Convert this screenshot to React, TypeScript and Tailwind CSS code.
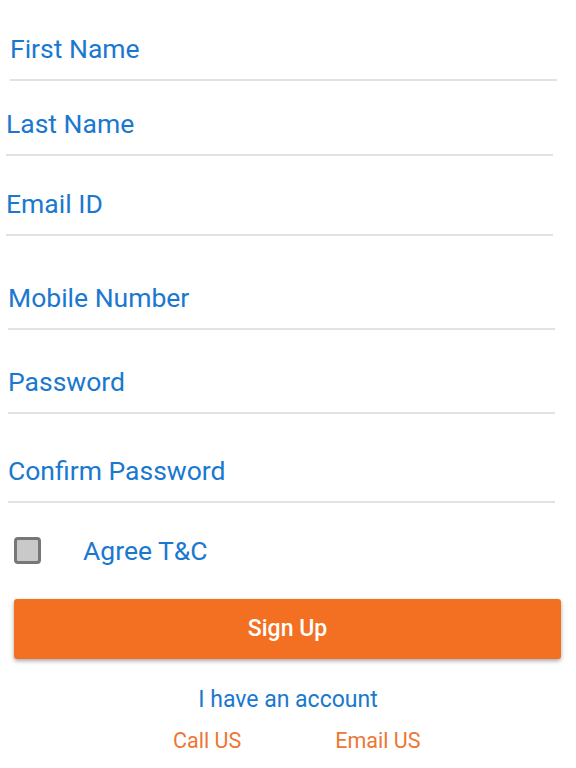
import { useState } from 'react';

const fields = [
  { label: 'First Name', wrap: 'mt-[33px] ml-[10px]' },
  { label: 'Last Name', wrap: 'mt-[27px] ml-[6px]' },
  { label: 'Email ID', wrap: 'mt-[32px] ml-[6px]' },
  { label: 'Mobile Number', wrap: 'mt-[46px] ml-[8px]' },
  { label: 'Password', wrap: 'mt-[36px] ml-[8px]' },
  { label: 'Confirm Password', wrap: 'mt-[41px] ml-[8px]' },
];

export default function App() {
  const [agreed, setAgreed] = useState(false);

  return (
    <div className="w-[576px] h-[768px] bg-white font-['Roboto','Liberation_Sans',sans-serif] overflow-hidden">
      {fields.map((field) => (
        <div
          key={field.label}
          className={`${field.wrap} w-[547px] border-b-2 border-[#e2e2e2] pb-[15px]`}
        >
          <div className="text-[26.5px] leading-[31px] text-[#1a78cf]">{field.label}</div>
        </div>
      ))}

      <div className="mt-[34px] ml-[14px] flex items-center h-[27px]">
        <button
          onClick={() => setAgreed(!agreed)}
          className="w-[27px] h-[27px] rounded-[4px] border-[3px] border-[#777777] bg-[#c9c9c9]"
        >
          {agreed && <span className="block text-[16px] leading-none text-[#555]">✓</span>}
        </button>
        <span className="ml-[42px] text-[26.5px] leading-[31px] text-[#1a78cf]">Agree T&amp;C</span>
      </div>

      <button className="mt-[35px] ml-[14px] w-[547px] h-[60px] rounded-[3px] bg-[#f37022] text-white text-[23px] font-medium shadow-[0_2px_4px_rgba(0,0,0,0.35)]">
        Sign Up
      </button>

      <div className="mt-[27px] text-center text-[23px] leading-[27px] text-[#1a78cf]">
        I have an account
      </div>

      <div className="mt-[15px] flex pl-[173px] gap-[94px] text-[21.5px] leading-[25px] text-[#ed7633]">
        <span>Call US</span>
        <span>Email US</span>
      </div>
    </div>
  );
}
